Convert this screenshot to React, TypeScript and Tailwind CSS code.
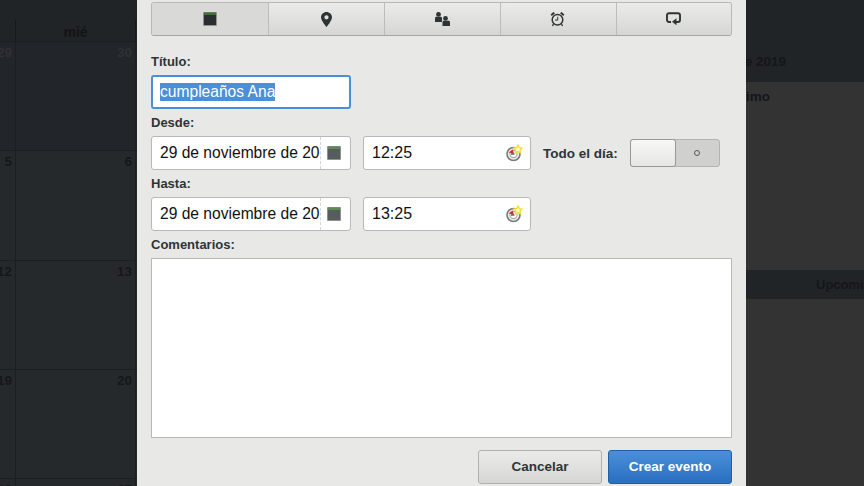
import React from 'react';

const weeks = [
  ['29', '30'],
  ['5', '6'],
  ['12', '13'],
  ['19', '20'],
  ['26', '27'],
];

const CalendarIcon = ({ dim = false }: { dim?: boolean }) => (
  <svg width="14" height="14" viewBox="0 0 14 14">
    <rect x="0" y="0" width="14" height="14" rx="1" fill="#8f918f" />
    <rect x="1" y="0.5" width="12" height="3" fill={dim ? '#5e8a58' : '#3f6e39'} />
    <rect x="1" y="3" width="12" height="10" fill={dim ? '#575c5e' : '#2a2e30'} />
  </svg>
);

const PinIcon = () => (
  <svg width="11" height="15" viewBox="0 0 11 15">
    <path
      fillRule="evenodd"
      d="M5.5 0C2.5 0 0 2.3 0 5.3 0 8.8 5.5 15 5.5 15S11 8.8 11 5.3C11 2.3 8.5 0 5.5 0zm0 3.2a2.1 2.1 0 1 1 0 4.2 2.1 2.1 0 0 1 0-4.2z"
      fill="#2e3436"
    />
  </svg>
);

const PeopleIcon = () => (
  <svg width="15" height="14" viewBox="0 0 15 14" fill="#2e3436">
    <circle cx="3.5" cy="2.4" r="2.4" />
    <path d="M0 10V6.2C0 5.4.6 4.8 1.4 4.8h4.2c.8 0 1.4.6 1.4 1.4V10z" />
    <circle cx="10.5" cy="6.4" r="2.4" />
    <path d="M7.5 14v-3.8c0-.8.6-1.4 1.4-1.4h4.7c.8 0 1.4.6 1.4 1.4V14z" />
  </svg>
);

const AlarmIcon = () => (
  <svg width="15" height="16" viewBox="0 0 15 16" fill="none">
    <circle cx="7.5" cy="8.8" r="5.3" stroke="#2e3436" strokeWidth="1.5" />
    <path d="M7.7 5.8v3.3H5" stroke="#2e3436" strokeWidth="1" />
    <path d="M0.6 3.6 3.4 0.9 5 2.2 1.8 5z M14.4 3.6 11.6 0.9 10 2.2 13.2 5z" fill="#2e3436" />
    <path d="M3.5 13.2 2.4 15M11.5 13.2 12.6 15" stroke="#2e3436" strokeWidth="1.3" />
  </svg>
);

const RepeatIcon = () => (
  <svg width="15" height="14" viewBox="0 0 15 14" fill="none">
    <path
      d="M5 10H3a2 2 0 0 1-2-2V3.2a2 2 0 0 1 2-2h9a2 2 0 0 1 2 2V8a2 2 0 0 1-2 2h-3"
      stroke="#2e3436"
      strokeWidth="1.9"
    />
    <path d="M10.5 6.2v7L6 9.7z" fill="#2e3436" />
  </svg>
);

const ClockIcon = () => (
  <svg width="17" height="18" viewBox="0 0 17 18">
    <circle cx="7.5" cy="10" r="6.5" fill="#f0f0ee" stroke="#77797a" strokeWidth="1.6" />
    <circle cx="7.5" cy="10" r="3.6" fill="#fff" stroke="#a9aaa8" strokeWidth="1.2" />
    <path d="M8 9.6 2.6 8.4 6.6 5.4z" fill="#d92a22" />
    <path d="M8.4 10H5" stroke="#2e3436" strokeWidth="1.2" />
    <path
      d="M12 1l1.3 2.6 2.9.4-2.1 2 .5 2.9-2.6-1.4-2.6 1.4.5-2.9-2.1-2 2.9-.4z"
      fill="#fffbd0"
      stroke="#f5e020"
      strokeWidth="1.2"
    />
  </svg>
);

const tabs = [
  { icon: <CalendarIcon />, active: true, width: 'w-[116px]' },
  { icon: <PinIcon />, width: 'w-[116px]' },
  { icon: <PeopleIcon />, width: 'w-[116px]' },
  { icon: <AlarmIcon />, width: 'w-[116px] pr-[2px]' },
  { icon: <RepeatIcon />, width: 'w-[115px] pr-[2px]' },
];

const Label = ({ children }: { children: React.ReactNode }) => (
  <div className="text-[13px] leading-[15px] font-bold text-[#2e3436]">{children}</div>
);

const DateField = ({ value }: { value: string }) => (
  <div className="relative flex h-[34px] w-[200px] items-center overflow-hidden rounded-[3px] border border-[#b8b9b6] bg-white">
    <span className="w-[168px] overflow-hidden pl-[8px] text-[15.6px] whitespace-nowrap text-[#111]">{value}</span>
    <div className="h-full border-l border-dashed border-[#d4d4d2]" />
    <div className="flex flex-1 items-center justify-center pr-[4px]">
      <CalendarIcon dim />
    </div>
  </div>
);

const TimeField = ({ value }: { value: string }) => (
  <div className="flex h-[34px] w-[168px] items-center justify-between rounded-[3px] border border-[#b8b9b6] bg-white pr-[7px] pl-[8px]">
    <span className="text-[16px] text-[#111]">{value}</span>
    <ClockIcon />
  </div>
);

export default function App() {
  return (
    <div
      className="relative flex h-[486px] w-[864px] overflow-hidden bg-[#212427]"
      style={{ fontFamily: '"Liberation Sans", Arial, sans-serif' }}
    >
      {/* Calendar behind the dialog */}
      <div className="flex h-full w-[746px] flex-col">
        <div className="h-[20px] shrink-0" />
        <div className="flex h-[22px] shrink-0 border-b border-[#1c1f21]">
          <div className="w-[16px] border-r border-[#17191b]" />
          <div className="flex w-[120px] justify-center border-r border-[#17191b] text-[14px] leading-[24px] font-bold text-[#121416]">
            mié
          </div>
        </div>
        {weeks.map(([a, b], i) => (
          <div
            key={a}
            className={`flex h-[109.25px] shrink-0 border-b border-[#1c1f21] ${i === 0 ? 'bg-[#222529]' : 'bg-[#26292c]'}`}
          >
            <div className="flex w-[16px] justify-end overflow-hidden border-r border-[#1c1f21] pt-[3px] pr-[3px] text-[13.5px] leading-[16px] font-bold">
              <span className={i === 0 ? 'text-[#2f3236]' : 'text-[#15171a]'}>{a}</span>
            </div>
            <div className="flex w-[120px] justify-end border-r border-[#1c1f21] pt-[3px] pr-[3px] text-[13.5px] leading-[16px] font-bold">
              <span className={i === 0 ? 'text-[#2f3236]' : 'text-[#15171a]'}>{b}</span>
            </div>
          </div>
        ))}
      </div>

      {/* Side panel */}
      <div className="flex h-full w-[118px] flex-col bg-[#333333] text-[13.5px] font-bold whitespace-nowrap text-[#141618]">
        <div className="flex h-[82px] shrink-0 items-end justify-end bg-[#212427] pr-[78px] pb-[13px]">
          <span className="translate-y-[3px]">noviembre 2019</span>
        </div>
        <div className="flex h-[188px] shrink-0 justify-end pt-[5px] pr-[94px]">
          <span>Próximo</span>
        </div>
        <div className="flex h-[29px] shrink-0 items-center bg-[#212427] pl-[70px] text-[13px]">
          <span>Upcoming</span>
        </div>
      </div>

      {/* Dialog */}
      <div className="absolute top-0 left-[137px] flex h-[486px] w-[609px] flex-col bg-[#e8e8e7] pt-[2px] pr-[14px] pl-[14px]">
        <div className="flex h-[34px] shrink-0 overflow-hidden rounded-[3px] border border-[#b8b9b6] border-b-[#a5a6a3]">
          {tabs.map((tab, i) => (
            <div
              key={i}
              className={`flex ${tab.width} items-center justify-center ${i > 0 ? 'border-l border-[#bcbdba]' : ''} ${
                tab.active ? 'bg-[#d9d9d7]' : 'bg-gradient-to-b from-[#ebebea] to-[#d6d6d4]'
              }`}
            >
              {tab.icon}
            </div>
          ))}
        </div>

        <div className="mt-[18px]">
          <Label>Título:</Label>
        </div>
        <div className="mt-[6px] flex h-[34px] w-[200px] shrink-0 items-center rounded-[3px] border-2 border-[#4a90d9] bg-white pl-[7px]">
          <span className="bg-[#4a90d9] text-[15.6px] leading-[18px] text-white">cumpleaños Ana</span>
        </div>

        <div className="mt-[6px]">
          <Label>Desde:</Label>
        </div>
        <div className="mt-[6px] flex shrink-0 items-center">
          <DateField value="29 de noviembre de 2019" />
          <div className="ml-[12px]">
            <TimeField value="12:25" />
          </div>
          <div className="ml-[12px] w-[75px] text-[13.5px] leading-[15px] font-bold whitespace-nowrap text-[#2e3436]">
            Todo el día:
          </div>
          <div className="ml-[12px] flex h-[28px] w-[90px] items-stretch rounded-[3px] border border-[#b4b5b2] bg-[#d0d0ce]">
            <div className="-m-px w-[46px] rounded-[3px] border border-[#98998f] bg-gradient-to-b from-[#f7f7f6] to-[#e6e6e5]" />
            <div className="flex flex-1 items-center justify-center">
              <div className="h-[6px] w-[6px] rounded-full border border-[#555a5c]" />
            </div>
          </div>
        </div>

        <div className="mt-[6px]">
          <Label>Hasta:</Label>
        </div>
        <div className="mt-[6px] flex shrink-0 items-center">
          <DateField value="29 de noviembre de 2019" />
          <div className="ml-[12px]">
            <TimeField value="13:25" />
          </div>
        </div>

        <div className="mt-[6px]">
          <Label>Comentarios:</Label>
        </div>
        <div className="mt-[6px] h-[180px] shrink-0 border border-[#b8b9b6] bg-white" />

        <div className="mt-[12px] flex shrink-0 justify-end gap-[6px]">
          <div className="flex h-[34px] w-[124px] items-center justify-center rounded-[3px] border border-[#b0b1ae] bg-gradient-to-b from-[#ebebea] to-[#d6d6d4] text-[13.5px] font-bold text-[#2e3436]">
            Cancelar
          </div>
          <div className="flex h-[34px] w-[124px] items-center justify-center rounded-[3px] border border-[#1e5fa8] bg-gradient-to-b from-[#4a90d9] to-[#2a6fc0] text-[13.5px] font-bold text-white">
            Crear evento
          </div>
        </div>
      </div>
    </div>
  );
}
